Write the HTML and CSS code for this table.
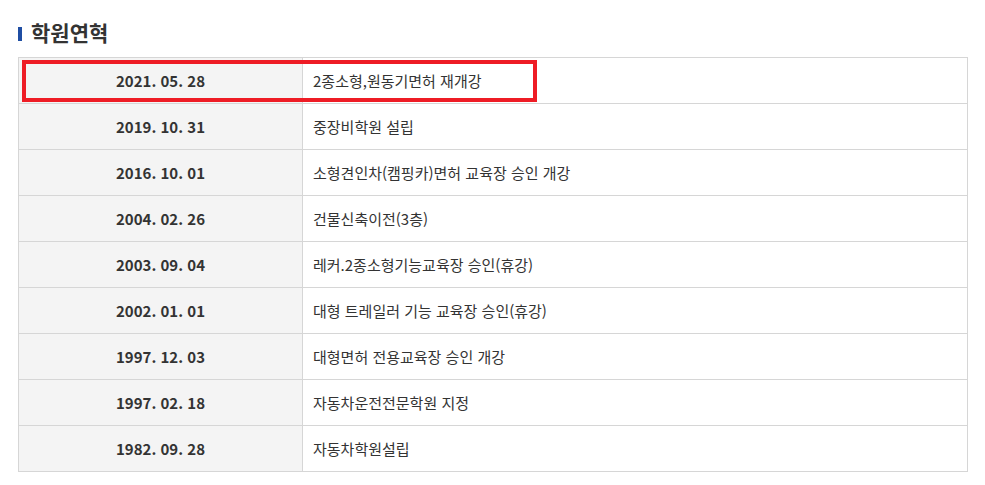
FILE: index.html
```html
<!DOCTYPE html>
<html lang="ko">
<head>
<meta charset="utf-8">
<link rel="stylesheet" href="styles.css">
</head>
<body>
<div class="wrap">
  <h2 class="title">학원연혁</h2>
  <div class="tbl-wrap">
    <table class="history">
      <tbody>
        <tr><th>2021. 05. 28</th><td>2종소형,원동기면허 재개강</td></tr>
        <tr><th>2019. 10. 31</th><td>중장비학원 설립</td></tr>
        <tr><th>2016. 10. 01</th><td>소형견인차(캠핑카)면허 교육장 승인 개강</td></tr>
        <tr><th>2004. 02. 26</th><td>건물신축이전(3층)</td></tr>
        <tr><th>2003. 09. 04</th><td>레커.2종소형기능교육장 승인(휴강)</td></tr>
        <tr><th>2002. 01. 01</th><td>대형 트레일러 기능 교육장 승인(휴강)</td></tr>
        <tr><th>1997. 12. 03</th><td>대형면허 전용교육장 승인 개강</td></tr>
        <tr><th>1997. 02. 18</th><td>자동차운전전문학원 지정</td></tr>
        <tr><th>1982. 09. 28</th><td>자동차학원설립</td></tr>
      </tbody>
    </table>
    <div class="highlight"></div>
  </div>
</div>
</body>
</html>
```
FILE: styles.css
```css
* { box-sizing: border-box; }
body {
  margin: 0;
  background: #fff;
  font-family: "Noto Sans CJK KR", "Noto Sans", sans-serif;
  color: #333;
}
.wrap {
  padding: 17px 18px 0 18px;
  width: 968px;
}
.title {
  margin: 0 0 10px 0;
  font-size: 21px;
  font-weight: 700;
  line-height: 30px;
  color: #333;
  display: flex;
  align-items: center;
  gap: 9px;
}
.title::before {
  content: "";
  display: block;
  width: 4px;
  height: 14px;
  background: #1f4ea3;
  margin-top: 3px;
}
.tbl-wrap {
  position: relative;
}
.history {
  width: 950px;
  border-collapse: collapse;
  border: 1px solid #d6d6d6;
}
.history th,
.history td {
  height: 46px;
  border-bottom: 1px solid #d6d6d6;
  padding: 0;
}
.history th {
  width: 284px;
  background: #f4f4f4;
  font-size: 15px;
  font-weight: 700;
  text-align: center;
  border-right: 1px solid #d6d6d6;
  color: #333;
}
.history td {
  text-align: left;
  padding-left: 10px;
  font-size: 15px;
  font-weight: 400;
  color: #333;
}
.highlight {
  position: absolute;
  left: 4px;
  top: 3px;
  width: 515px;
  height: 42px;
  border: 4px solid #ee1c25;
}
```
